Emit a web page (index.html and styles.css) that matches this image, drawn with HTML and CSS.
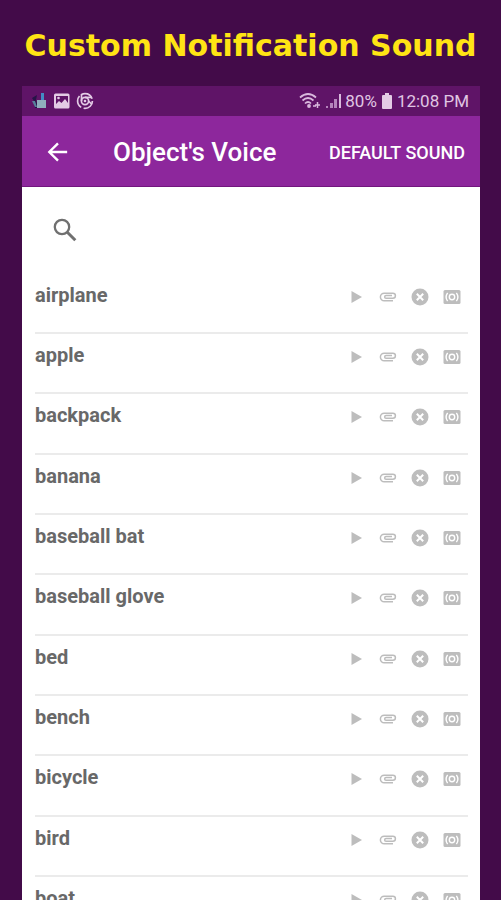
FILE: index.html
```html
<!DOCTYPE html>
<html lang="en">
<head>
<meta charset="utf-8">
<meta name="viewport" content="width=device-width, initial-scale=1">
<title>Custom Notification Sound</title>
<link rel="stylesheet" href="styles.css">
</head>
<body>
<svg class="symbols" aria-hidden="true">
  <symbol id="play" viewBox="0 0 18 18"><path d="M4.500 3v12l10.500-6z" fill="currentColor"/></symbol>
  <symbol id="clip" viewBox="0 0 18 18"><path d="M14 12.800H5.200a3.800 3.800 0 0 1 0-7.600h8.700a2.500 2.500 0 0 1 0 5H7a1.300 1.300 0 0 1 0-2.600h6" fill="none" stroke="currentColor" stroke-width="1.500"/></symbol>
  <symbol id="cancel" viewBox="0 0 18 18"><circle cx="9" cy="9" r="8.500" fill="currentColor"/><path d="M5.800 5.800l6.400 6.400M12.200 5.800l-6.400 6.400" stroke="#fff" stroke-width="2"/></symbol>
  <symbol id="surround" viewBox="0 0 18 18"><rect x="0.500" y="2" width="17" height="14" rx="1.500" fill="currentColor"/><g fill="none" stroke="#fff" stroke-width="1.400"><circle cx="9" cy="9" r="2.700"/><path d="M4.600 4.800q-3 4.200 0 8.400M13.400 4.800q3 4.200 0 8.400"/></g></symbol>
</svg>
<h1 class="headline">Custom Notification Sound</h1>
<main class="phone">
  <div class="status">
    <svg class="status-icon" viewBox="0 0 18 18" aria-hidden="true"><path d="M2 6l5-3-1 5 2 8H5L4 9z" fill="#251447"/><path d="M11 1h3v8h-3z" fill="#438bc4"/><path d="M7 8h9v8H7z" fill="#90aebd"/><path d="M2 9h3l2 6H5z" fill="#587e9b"/></svg>
    <svg class="status-icon" viewBox="0 0 18 18" aria-hidden="true"><path fill-rule="evenodd" d="M2.500 1.500h12.500a1.500 1.500 0 0 1 1.500 1.500v12a1.500 1.500 0 0 1-1.500 1.500H2.500A1.500 1.500 0 0 1 1 15V3a1.500 1.500 0 0 1 1.500-1.500zM3 4v8l3-3 2.500 2 3.500-4 3 4V4z" fill="#e3cbe5"/><circle cx="5.500" cy="6" r="1.300" fill="#e3cbe5"/></svg>
    <svg class="status-icon" viewBox="0 0 18 18" aria-hidden="true"><g fill="none" stroke="#e3cbe5" stroke-width="1.700"><circle cx="9" cy="9" r="7.400" stroke-dasharray="13 2.500"/><circle cx="9" cy="9" r="3.600"/><path d="M5.500 2v7M12.500 9l3 3M9 5.400h6"/></g><circle cx="9" cy="9" r="1.300" fill="#e3cbe5"/></svg>
    <span class="status-right">
      <svg class="wifi" viewBox="0 0 22 18" aria-hidden="true"><g fill="none" stroke="#d9b9dd" stroke-width="1.700"><path d="M1 5.500q8-7 16 0M3.500 8.500q5.500-5 11 0M6 11.500q3-3 6 0"/><path d="M14 14h3M18.500 10v6M16 13h5" stroke-width="1.500"/></g><circle cx="10" cy="14" r="1.900" fill="#d9b9dd"/></svg>
      <svg class="signal" viewBox="0 0 16 18" aria-hidden="true"><path d="M1 14h2v2H1zM5 11h3v5H5zM9 7h3v9H9z" fill="#b484bb"/><path d="M14 2h2v14h-2z" fill="#d9b9dd"/></svg>
      <span>80%</span>
      <svg class="battery" viewBox="0 0 12 18" aria-hidden="true"><path d="M4 1h4v2h2q1 0 1 1v12q0 1-1 1H2q-1 0-1-1V4q0-1 1-1h2z" fill="#e3cbe5"/></svg>
      <span>12:08 PM</span>
    </span>
  </div>
  <header class="bar">
    <button class="back" aria-label="Back"><svg viewBox="0 0 24 24"><path d="M22 12H3M12 2.500L2.500 12l9.500 9.500" fill="none" stroke="#fff" stroke-width="2.600"/></svg></button>
    <h2 class="bar-title">Object's Voice</h2>
    <button class="default">DEFAULT SOUND</button>
  </header>
  <button class="search" aria-label="Search"><svg viewBox="0 0 24 24"><g fill="none" stroke="#707070"><circle cx="9" cy="9" r="7.200" stroke-width="2.300"/><path d="M14.300 14.300l8 8" stroke-width="3"/></g></svg></button>
  <ul class="list" id="list"></ul>
</main>
<script src="list.js"></script>
</body>
</html>
```
FILE: styles.css
```css
* {
  box-sizing: border-box;
}

body {
  margin: 0;
  height: 100vh;
  overflow: hidden;
  display: flex;
  flex-direction: column;
  background: #430b49;
  font-family: Roboto, "Liberation Sans", sans-serif;
}

button {
  padding: 0;
  border: 0;
  background: none;
  color: inherit;
  font: inherit;
}

svg {
  flex: none;
}

button svg {
  display: block;
}

.symbols {
  display: none;
}

.headline {
  margin: 0;
  padding: 28px 0 22px;
  color: #ffe414;
  font: bold 30px/36px "DejaVu Sans", sans-serif;
  text-align: center;
  white-space: nowrap;
}

.phone {
  flex: 1 0 auto;
  margin: 0 21px 0 22px;
  background: #fff;
}

.status {
  display: flex;
  align-items: center;
  gap: 5px;
  height: 30px;
  padding: 0 11px 0 8px;
  background: #5f1467;
  color: #e0c6e3;
  font-size: 17px;
}

.status-icon {
  width: 18px;
  height: 18px;
}

.status-right {
  display: flex;
  align-items: center;
  gap: 4px;
  margin-left: auto;
}

.wifi {
  width: 22px;
  height: 18px;
}

.signal {
  width: 16px;
  height: 18px;
}

.battery {
  width: 12px;
  height: 18px;
}

.bar {
  display: flex;
  align-items: center;
  height: 71px;
  padding: 2px 15px 0 25px;
  border-bottom: 1px solid #72177e;
  background: #8d279c;
  color: #fff;
}

.back svg {
  width: 22px;
  height: 22px;
}

.bar-title {
  margin: 0 auto 0 44px;
  font-size: 26px;
  font-weight: 500;
  white-space: nowrap;
}

.default {
  font-size: 18px;
  font-weight: 500;
  white-space: nowrap;
}

.search {
  display: block;
  margin: 31px 0 32px 31px;
}

.search svg {
  width: 24px;
  height: 24px;
}

.list {
  display: grid;
  grid-auto-rows: 60px 60px 61px;
  margin: 0;
  padding: 0 12px 0 13px;
  list-style: none;
}

.item {
  display: flex;
  align-items: flex-start;
  justify-content: space-between;
  padding-top: 8px;
  border-bottom: 2px solid #ebebeb;
  color: #686868;
  font-size: 20px;
  font-weight: 700;
  line-height: 26px;
}

.actions {
  display: flex;
  color: #bdbdbd;
}

.actions button {
  display: grid;
  place-items: center;
  width: 32px;
  height: 30px;
}

.actions svg {
  width: 18px;
  height: 18px;
}
```
FILE: list.js
```js
const names = ["airplane", "apple", "backpack", "banana", "baseball bat",
  "baseball glove", "bed", "bench", "bicycle", "bird", "boat"];
const actions = [["play", "Play"], ["clip", "Attach sound"],
  ["cancel", "Remove sound"], ["surround", "Voice"]];

document.getElementById("list").innerHTML = names.map(name => `
  <li class="item"><span>${name}</span><span class="actions">${actions.map(([icon, label]) =>
    `<button aria-label="${label} ${name}"><svg><use href="#${icon}"/></svg></button>`).join("")}</span></li>`).join("");
```
